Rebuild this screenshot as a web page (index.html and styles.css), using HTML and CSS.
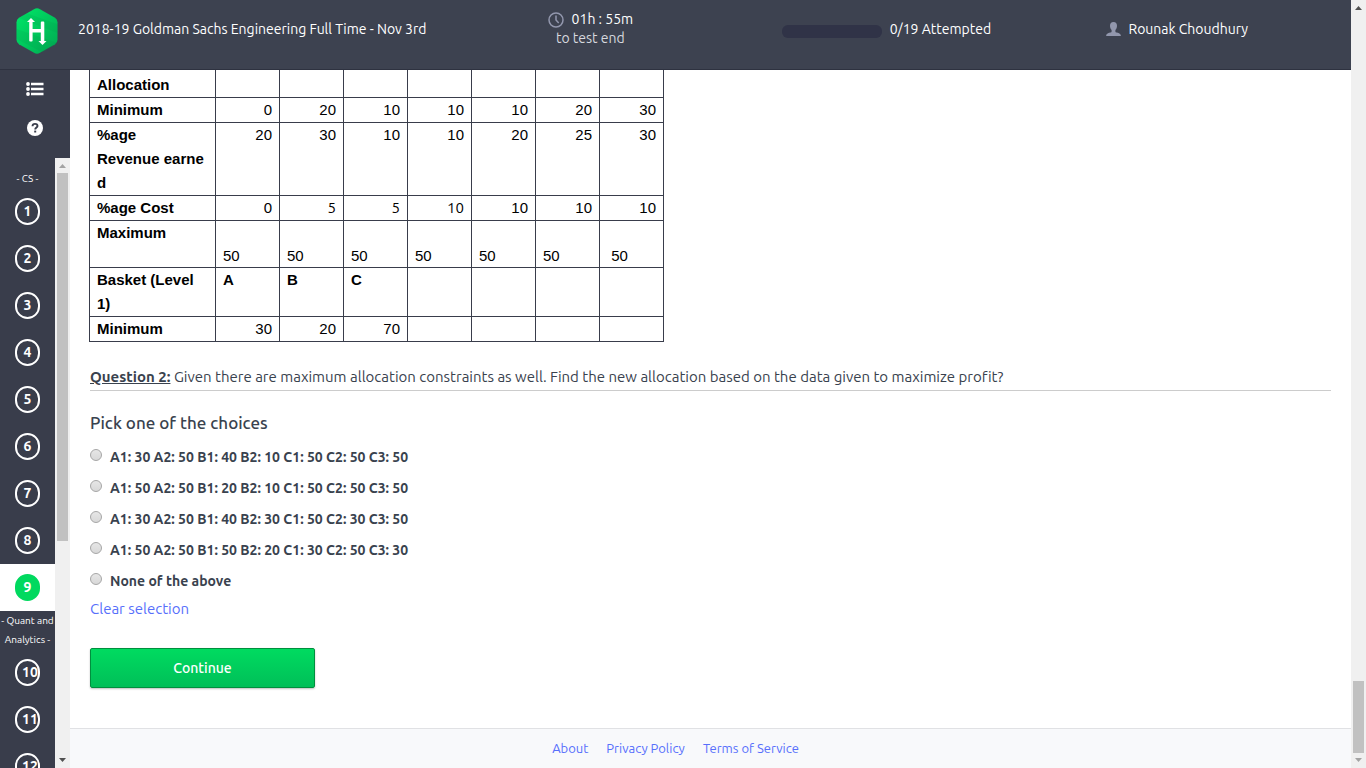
FILE: index.html
```html
<!DOCTYPE html>
<html lang="en">
<head>
<meta charset="utf-8">
<meta name="viewport" content="width=device-width, initial-scale=1">
<title>2018-19 Goldman Sachs Engineering Full Time - Nov 3rd</title>
<link rel="stylesheet" href="styles.css">
</head>
<body>
<div class="window">
  <div class="app">
    <header class="topbar">
      <div class="brand">
        <svg class="logo" width="42" height="46" viewBox="0 0 42 46" aria-hidden="true">
          <defs>
            <linearGradient id="hex" x1="0" y1="0" x2="1" y2="1">
              <stop offset="0" stop-color="#00e868"/>
              <stop offset="1" stop-color="#00a951"/>
            </linearGradient>
          </defs>
          <path fill="url(#hex)" d="M18 1.200q3-1.700 6 0l15 8.600q2.500 1.500 2.500 4.500v17.400q0 3-2.500 4.500l-15 8.600q-3 1.700-6 0l-15-8.600Q.5 34.700.5 31.700V14.300q0-3 2.500-4.500z"/>
          <path fill="#008f45" opacity=".14" d="M.5 21l41 14-1.500 2-13 7.500L.5 31zM11 5.300l30.500 11V25L3 10z"/>
          <path fill="#fff" d="M15 10l4 4h-2.400v7h8.200v-6.500q0-1 1-1h1.500q1 0 1 1V33h2.200l-4 4-4-4h2.300v-8.500h-8.200v8q0 1-1 1H14.200q-1 0-1-1V14H11z"/>
        </svg>
        <span>2018-19 Goldman Sachs Engineering Full Time - Nov 3rd</span>
      </div>
      <div class="timer">
        <div class="timer-value">
          <svg width="16" height="16" viewBox="0 0 16 16" fill="none" stroke="#9297ad" stroke-width="1.500" aria-hidden="true"><circle cx="8" cy="8" r="7"/><path d="M8 3.500V8l2.700 3"/></svg>
          <span>01h : 55m</span>
        </div>
        <div class="timer-note">to test end</div>
      </div>
      <div class="attempts">
        <div class="progress" role="progressbar" aria-label="Attempted" aria-valuenow="0" aria-valuemin="0" aria-valuemax="19"></div>
        <span>0/19 Attempted</span>
      </div>
      <div class="user">
        <svg width="15" height="14" viewBox="0 0 15 14" fill="#9297ad" aria-hidden="true"><path d="M7.500 0C9.800 0 11 1.400 11 3.700 11 5.600 10.300 7 9.400 7.900v1.500c0 .6.500.9 1.500 1.200 2.500.7 3.800 1.200 4 3.400H.1c.2-2.200 1.500-2.700 4-3.400 1-.3 1.500-.6 1.500-1.200V7.900C4.700 7 4 5.600 4 3.700 4 1.400 5.200 0 7.500 0z"/></svg>
        <span>Rounak Choudhury</span>
      </div>
    </header>

    <div class="workspace">
      <aside class="sidebar">
        <div class="tools">
          <button class="tool" type="button" aria-label="All questions">
            <svg width="18" height="14" viewBox="0 0 18 14" fill="#fff"><circle cx="2" cy="2" r="1.900"/><circle cx="2" cy="7" r="1.900"/><circle cx="2" cy="12" r="1.900"/><path d="M5 .8h12.500v2.400H5zM5 5.800h12.500v2.400H5zM5 10.800h12.500v2.400H5z"/></svg>
          </button>
          <button class="tool" type="button" aria-label="Help">
            <svg width="16" height="16" viewBox="0 0 16 16"><circle cx="8" cy="8" r="8" fill="#fff"/><path d="M5.500 6.200C5.600 4.600 6.600 3.900 8 3.900s2.500.8 2.500 2.100C10.500 7.500 8.200 7.600 8.200 9.500" fill="none" stroke="#393d4b" stroke-width="1.900"/><path d="M7.200 10.600h2v1.900h-2z" fill="#393d4b"/></svg>
          </button>
        </div>
        <div class="question-nav">
          <nav class="question-list" aria-label="Questions">
            <div class="section-name">- CS -</div>
            <a class="item" href="#q1"><span class="number">1</span></a>
            <a class="item" href="#q2"><span class="number">2</span></a>
            <a class="item" href="#q3"><span class="number">3</span></a>
            <a class="item" href="#q4"><span class="number">4</span></a>
            <a class="item" href="#q5"><span class="number">5</span></a>
            <a class="item" href="#q6"><span class="number">6</span></a>
            <a class="item" href="#q7"><span class="number">7</span></a>
            <a class="item" href="#q8"><span class="number">8</span></a>
            <a class="item current" href="#q9" aria-current="page"><span class="number">9</span></a>
            <div class="section-name">- Quant and Analytics -</div>
            <a class="item" href="#q10"><span class="number">10</span></a>
            <a class="item" href="#q11"><span class="number">11</span></a>
            <a class="item" href="#q12"><span class="number">12</span></a>
          </nav>
          <div class="scrollbar" aria-hidden="true">
            <svg class="arrow dim" viewBox="0 0 15 15"><path d="M4 10h7L7.500 6z"/></svg>
            <div class="track"><div class="thumb nav-thumb"></div></div>
            <svg class="arrow" viewBox="0 0 15 15"><path d="M4 5h7L7.500 9z"/></svg>
          </div>
        </div>
      </aside>

      <div class="page">
        <main class="content">
          <table class="data">
            <colgroup><col class="label-col"><col span="7" class="value-col"></colgroup>
            <tbody>
              <tr class="first"><th scope="row">Allocation</th><td></td><td></td><td></td><td></td><td></td><td></td><td></td></tr>
              <tr><th scope="row">Minimum</th><td>0</td><td>20</td><td>10</td><td>10</td><td>10</td><td>20</td><td>30</td></tr>
              <tr><th scope="row">%age<br>Revenue earne<br>d</th><td>20</td><td>30</td><td>10</td><td>10</td><td>20</td><td>25</td><td>30</td></tr>
              <tr><th scope="row">%age Cost</th><td>0</td><td class="plain">5</td><td class="plain">5</td><td class="plain">10</td><td>10</td><td>10</td><td>10</td></tr>
              <tr class="maximum"><th scope="row">Maximum</th><td>50</td><td>50</td><td>50</td><td>50</td><td>50</td><td>50</td><td>&nbsp;50</td></tr>
              <tr><th scope="row">Basket (Level<br>1)</th><th scope="col">A</th><th scope="col">B</th><th scope="col">C</th><td></td><td></td><td></td><td></td></tr>
              <tr><th scope="row">Minimum</th><td>30</td><td>20</td><td>70</td><td></td><td></td><td></td><td></td></tr>
            </tbody>
          </table>

          <p class="question"><strong>Question 2:</strong> Given there are maximum allocation constraints as well. Find the new allocation based on the data given to maximize profit?</p>

          <form class="answers">
            <fieldset class="choices">
              <legend>Pick one of the choices</legend>
              <label class="choice"><input type="radio" name="answer"><span>A1: 30 A2: 50 B1: 40 B2: 10 C1: 50 C2: 50 C3: 50</span></label>
              <label class="choice"><input type="radio" name="answer"><span>A1: 50 A2: 50 B1: 20 B2: 10 C1: 50 C2: 50 C3: 50</span></label>
              <label class="choice"><input type="radio" name="answer"><span>A1: 30 A2: 50 B1: 40 B2: 30 C1: 50 C2: 30 C3: 50</span></label>
              <label class="choice"><input type="radio" name="answer"><span>A1: 50 A2: 50 B1: 50 B2: 20 C1: 30 C2: 50 C3: 30</span></label>
              <label class="choice"><input type="radio" name="answer"><span>None of the above</span></label>
            </fieldset>
            <a class="clear" href="#clear">Clear selection</a>
            <button class="continue" type="button">Continue</button>
          </form>
        </main>
        <footer class="footer">
          <a href="#about">About</a>
          <a href="#privacy">Privacy Policy</a>
          <a href="#terms">Terms of Service</a>
        </footer>
      </div>
    </div>
  </div>
  <div class="scrollbar" aria-hidden="true">
    <svg class="arrow" viewBox="0 0 15 15"><path d="M4 10h7L7.500 6z"/></svg>
    <div class="track bottom"><div class="thumb page-thumb"></div></div>
    <svg class="arrow dim" viewBox="0 0 15 15"><path d="M4 5h7L7.500 9z"/></svg>
  </div>
</div>
</body>
</html>
```
FILE: styles.css
```css
* {
  box-sizing: border-box;
}

body {
  margin: 0;
  background: #fff;
  color: #39424e;
  font-family: Ubuntu, "Noto Sans", sans-serif;
  font-size: 14px;
  font-variant-ligatures: none;
  line-height: 24px;
}

a {
  color: #576ffb;
  text-decoration: none;
}

.window {
  display: flex;
  height: 100vh;
  overflow: hidden;
}

.app {
  display: flex;
  flex: 1;
  flex-direction: column;
  min-width: 0;
}

/* Top bar */
.topbar {
  display: grid;
  flex: none;
  grid-template-columns: 32.5% 22.4% 27% 1fr;
  align-items: start;
  height: 70px;
  border-bottom: 1px solid #2e3240;
  background: #3d4250;
  color: #fff;
  white-space: nowrap;
}

.brand {
  display: flex;
  gap: 20px;
  padding: 8px 0 0 16px;
}

.brand span {
  padding-top: 9px;
}

.logo {
  flex: none;
}

.timer {
  padding-top: 10px;
  line-height: 19px;
  text-align: center;
}

.timer-value {
  display: flex;
  align-items: center;
  justify-content: center;
  gap: 8px;
}

.timer-note {
  color: #d6d8de;
}

.attempts {
  display: flex;
  align-items: center;
  gap: 8px;
  padding: 17px 0 0 40px;
}

.progress {
  width: 100px;
  height: 13px;
  margin-top: 4px;
  border-radius: 6px;
  background: #303347;
}

.user {
  display: flex;
  align-items: center;
  gap: 7px;
  padding-top: 17px;
}

/* Sidebar */
.workspace {
  display: flex;
  flex: 1;
  min-height: 0;
}

.sidebar {
  display: flex;
  flex: none;
  flex-direction: column;
  width: 70px;
  background: #393d4b;
}

.tools {
  display: flex;
  flex: none;
  flex-direction: column;
  align-items: center;
  gap: 22px;
  height: 88px;
  padding-top: 10px;
}

.tool {
  display: flex;
  align-items: center;
  height: 17px;
  padding: 0;
  border: 0;
  background: none;
}

.question-nav {
  display: flex;
  flex: 1;
  min-height: 0;
}

.question-list {
  flex: 1;
  overflow: hidden;
  padding-top: 11px;
}

.section-name {
  color: #fff;
  font-size: 10px;
  line-height: 19px;
  text-align: center;
}

.item {
  display: flex;
  align-items: center;
  justify-content: center;
  height: 47px;
}

.number {
  width: 25px;
  height: 27px;
  padding: 0 5px;
  border: 2px solid #fff;
  border-radius: 13px;
  color: #fff;
  font-weight: 700;
  line-height: 22px;
  text-align: center;
}

.current {
  background: #fff;
}

.current .number {
  border-color: #00d95f;
  background: #00d95f;
}

/* Scrollbars */
.scrollbar {
  display: flex;
  flex: none;
  flex-direction: column;
  width: 15px;
  background: #f0f0f0;
}

.arrow {
  flex: none;
  width: 15px;
  height: 15px;
  fill: #505050;
}

.dim {
  fill: #a3a3a3;
}

.track {
  display: flex;
  flex: 1;
  flex-direction: column;
  align-items: center;
}

.bottom {
  justify-content: flex-end;
}

.thumb {
  width: 11px;
  background: #c1c1c1;
}

.nav-thumb {
  height: 63.5%;
}

.page-thumb {
  height: 9.8%;
}

/* Page */
.page {
  display: flex;
  flex: 1;
  flex-direction: column;
  min-width: 0;
}

.content {
  flex: 1;
  padding: 0 20px;
}

.data {
  width: 575px;
  margin-left: -1px;
  border-collapse: collapse;
  table-layout: fixed;
  color: #000;
  font-family: "Liberation Sans", Arial, sans-serif;
  font-size: 15px;
}

.label-col {
  width: 126px;
}

.value-col {
  width: 64px;
}

.data th,
.data td {
  height: 25px;
  padding: 0 7px;
  border: 1px solid #393d4b;
  vertical-align: top;
}

.data th {
  text-align: left;
}

.data td {
  text-align: right;
}

.data .first > * {
  height: 27px;
  padding-top: 3px;
  border-top: 0;
}

.data .first > th {
  line-height: 23px;
}

.data .plain {
  font-family: Ubuntu, "Noto Sans", sans-serif;
}

.data .maximum > * {
  height: 47px;
}

.data .maximum td {
  line-height: 22px;
  text-align: left;
  vertical-align: bottom;
}

.question {
  margin: 23px 0 20px;
  padding-bottom: 1px;
  border-bottom: 1px solid #ccc;
  font-size: 15px;
}

.question strong {
  text-decoration: underline;
}

.answers {
  display: flex;
  flex-direction: column;
  align-items: flex-start;
}

.choices {
  margin: 0;
  padding: 0;
  border: 0;
}

.choices legend {
  margin-bottom: 7px;
  padding: 0;
  font-size: 17px;
  font-weight: 500;
}

.choice {
  display: flex;
  align-items: center;
  gap: 8px;
  height: 31px;
  font-weight: 700;
}

.choice input {
  width: 12px;
  height: 12px;
  margin: 0 0 4px;
  border: 1px solid #a6a6a6;
  border-radius: 50%;
  appearance: none;
  background: linear-gradient(#e6e6e6, #d8d8d8);
}

.clear {
  font-size: 15px;
}

.continue {
  width: 225px;
  height: 40px;
  margin-top: 27px;
  border: 1px solid #008f3e;
  border-radius: 2px;
  background: linear-gradient(#00db60, #00bf58);
  box-shadow: 0 1px 2px rgba(0, 0, 0, 0.25);
  color: #fff;
  font: inherit;
  font-weight: 500;
}

/* Links are centred on the whole app, sidebar included */
.footer {
  display: flex;
  flex: none;
  justify-content: center;
  gap: 18px;
  height: 40px;
  padding: 7px 70px 0 0;
  border-top: 1px solid #e0e1e4;
  background: #f8f9fb;
  font-size: 13px;
}
```
